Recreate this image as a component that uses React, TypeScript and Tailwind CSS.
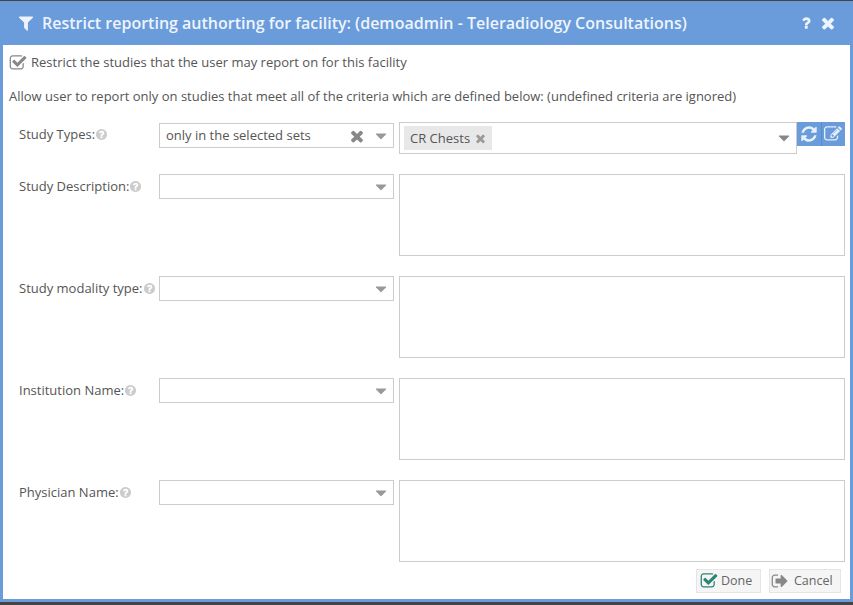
import React from 'react';

const paths = {
  filter: 'M1595 295q17 41-14 70l-493 493v742q0 42-39 59-13 5-25 5-27 0-45-19l-256-256q-19-19-19-45v-486l-493-493q-31-29-14-70 17-39 59-39h1280q42 0 59 39z',
  question: 'M1088 1256v240q0 16-12 28t-28 12h-240q-16 0-28-12t-12-28v-240q0-16 12-28t28-12h240q16 0 28 12t12 28zm316-600q0 54-15.5 101t-35 76.5-55 59.5-57.5 43.5-61 35.5q-41 23-68.5 65t-27.5 67q0 17-12 32.5t-28 15.5h-240q-15 0-25.5-18.5t-10.5-37.5v-45q0-83 65-156.5t143-108.5q59-27 84-56t25-76q0-42-46.5-74t-107.5-32q-65 0-108 29-35 25-107 115-13 16-31 16-12 0-25-8l-164-125q-13-10-15.5-25t5.5-28q160-266 464-266 80 0 161 31t146 83 106 127.5 41 158.5z',
  times: 'M1490 1322q0 40-28 68l-136 136q-28 28-68 28t-68-28l-294-294-294 294q-28 28-68 28t-68-28l-136-136q-28-28-28-68t28-68l294-294-294-294q-28-28-28-68t28-68l136-136q28-28 68-28t68 28l294 294 294-294q28-28 68-28t68 28l136 136q28 28 28 68t-28 68l-294 294 294 294q28 28 28 68z',
  check: 'M1472 930v318q0 119-84.5 203.5t-203.5 84.5h-832q-119 0-203.5-84.5t-84.5-203.5v-832q0-119 84.5-203.5t203.5-84.5h832q63 0 117 25 15 7 18 23 3 17-9 29l-49 49q-10 10-23 10-3 0-9-2-23-6-45-6h-832q-66 0-113 47t-47 113v832q0 66 47 113t113 47h832q66 0 113-47t47-113v-254q0-13 9-22l64-64q10-10 23-10 6 0 12 3 20 8 20 29zm231-489l-814 814q-24 24-57 24t-57-24l-430-430q-24-24-24-57t24-57l110-110q24-24 57-24t57 24l263 263 647-647q24-24 57-24t57 24l110 110q24 24 24 57t-24 57z',
  refresh: 'M1639 1056q0 5-1 7-64 268-268 434.5t-478 166.5q-146 0-282.5-55t-243.5-157l-129 129q-19 19-45 19t-45-19-19-45v-448q0-26 19-45t45-19h448q26 0 45 19t19 45-19 45l-137 137q71 66 161 102t187 36q134 0 250-65t186-179q11-17 53-117 8-23 30-23h192q13 0 22.5 9.5t9.5 22.5zm25-800v448q0 26-19 45t-45 19h-448q-26 0-45-19t-19-45 19-45l138-138q-148-137-349-137-134 0-250 65t-186 179q-11 17-53 117-8 23-30 23h-199q-13 0-22.5-9.5t-9.5-22.5v-7q65-268 270-434.5t480-166.5q146 0 284 55.5t245 156.5l130-129q19-19 45-19t45 19 19 45z',
  edit: 'M888 1184l116-116-152-152-116 116v56h96v96h56zm440-720q-16-16-33 1l-350 350q-17 17-1 33t33-1l350-350q17-17 1-33zm80 594v190q0 119-84.5 203.5t-203.5 84.5h-832q-119 0-203.5-84.5t-84.5-203.5v-832q0-119 84.5-203.5t203.5-84.5h832q63 0 117 25 15 7 18 23 3 17-9 29l-49 49q-14 14-32 8-23-6-45-6h-832q-66 0-113 47t-47 113v832q0 66 47 113t113 47h832q66 0 113-47t47-113v-126q0-13 9-22l64-64q15-15 35-7t20 29zm-96-738l288 288-672 672h-288v-288zm444 132l-92 92-288-288 92-92q28-28 68-28t68 28l152 152q28 28 28 68t-28 68z',
  help: 'M1024 1376v-192q0-14-9-23t-23-9h-192q-14 0-23 9t-9 23v192q0 14 9 23t23 9h192q14 0 23-9t9-23zm256-672q0-88-55.5-163t-138.5-116-170-41q-243 0-371 213-15 24 8 42l132 100q7 6 19 6 16 0 25-12 53-68 86-92 34-24 86-24 48 0 85.5 26t37.5 59q0 38-20 61t-68 45q-63 28-115.5 86.5t-52.5 125.5v36q0 14 9 23t23 9h192q14 0 23-9t9-23q0-19 21.5-49.5t54.5-49.5q32-18 49-28.5t46-35 44.5-48 28-60.5 12.5-81zm384 192q0 209-103 385.5t-279.5 279.5-385.5 103-385.5-103-279.5-279.5-103-385.5 103-385.5 279.5-279.5 385.5-103 385.5 103 279.5 279.5 103 385.5z',
  caret: 'M1408 704q0 26-19 45l-448 448q-19 19-45 19t-45-19l-448-448q-19-19-19-45t19-45 45-19h896q26 0 45 19t19 45z',
  signOut: 'M704 1440q0 4 1 20t.5 26.5-3 23.5-10 19.5-20.5 6.5h-320q-119 0-203.5-84.5t-84.5-203.5v-704q0-119 84.5-203.5t203.5-84.5h320q13 0 22.5 9.5t9.5 22.5q0 4 1 20t.5 26.5-3 23.5-10 19.5-20.5 6.5h-320q-66 0-113 47t-47 113v704q0 66 47 113t113 47h312l11.5 1 11.5 3 8 5.5 7 9 2 13.5zm928-544q0 26-19 45l-544 544q-19 19-45 19t-45-19-19-45v-288h-448q-26 0-45-19t-19-45v-384q0-26 19-45t45-19h448v-288q0-26 19-45t45-19 45 19l544 544q19 19 19 45z',
};

const Icon: React.FC<{ name: keyof typeof paths; className: string }> = ({ name, className }) => (
  <svg viewBox="0 0 1792 1792" fill="currentColor" className={`shrink-0 ${className}`}>
    <path d={paths[name]} />
  </svg>
);

const SelectBox: React.FC<{ value?: string }> = ({ value }) => (
  <div className="flex h-[25px] w-[235px] shrink-0 items-center border border-[#cccccc] bg-white pl-[6px] pr-[3px]">
    <span className="flex-1 text-[13px] text-[#555555]">{value}</span>
    {value && <Icon name="times" className="mr-[6px] h-[18px] w-[18px] text-[#888888]" />}
    <Icon name="caret" className="h-[18px] w-[18px] text-[#999999]" />
  </div>
);

const Label: React.FC<{ text: string }> = ({ text }) => (
  <div className="flex h-[25px] w-[156px] shrink-0 items-center pl-[16px] text-[13px] text-[#555555]">
    <span className="whitespace-nowrap">{text}</span>
    <Icon name="help" className="h-[13px] w-[13px] text-[#cccccc]" />
  </div>
);

const rows = ['Study Description:', 'Study modality type:', 'Institution Name:', 'Physician Name:'];

export default function App() {
  return (
    <div className="h-[605px] w-[853px] overflow-hidden bg-[#444444] pt-[1px] font-['Open_Sans',sans-serif]">
      <div className="flex h-[601px] flex-col border-x-[3px] border-b-[3px] border-[#6a9bdb] bg-white">
        <div className="-mx-[3px] flex h-[44px] shrink-0 items-center bg-[#6a9bdb] pl-[17px] pr-[16px] text-[#eef4fb]">
          <Icon name="filter" className="mr-[7px] h-[18px] w-[18px]" />
          <span className="flex-1 text-[16px] font-semibold">
            Restrict reporting authorting for facility: (demoadmin - Teleradiology Consultations)
          </span>
          <Icon name="question" className="mr-[5px] h-[16px] w-[16px]" />
          <Icon name="times" className="h-[18px] w-[18px]" />
        </div>

        <div className="flex h-[34px] items-center pl-[6px] pt-[1px] text-[13px] text-[#555555]">
          <Icon name="check" className="mr-[4px] h-[18px] w-[18px] text-[#888888]" />
          Restrict the studies that the user may report on for this facility
        </div>
        <div className="h-[27px] pl-[6px] pt-[8px] text-[13px] leading-[18px] text-[#555555]">
          Allow user to report only on studies that meet all of the criteria which are defined below: (undefined criteria are ignored)
        </div>

        <div className="flex pr-[5px] pt-[16px]">
          <Label text="Study Types:" />
          <div className="mt-[1px]">
            <SelectBox value="only in the selected sets" />
          </div>
          <div className="ml-[5px] flex h-[32px] w-[398px] items-center border border-[#cccccc] pl-[4px] pr-[3px]">
            <span className="flex h-[24px] items-center bg-[#e8e8e8] pl-[6px] pr-[5px] pt-[1px] text-[13px] text-[#555555]">
              CR Chests
              <Icon name="times" className="ml-[4px] h-[13px] w-[13px] text-[#999999]" />
            </span>
            <span className="flex-1" />
            <Icon name="caret" className="h-[18px] w-[18px] text-[#888888]" />
          </div>
          <div className="flex h-[24px] w-[48px] bg-[#6a9bdb] text-[#e8f0fa]">
            <span className="flex flex-1 items-center justify-center border-r border-[#5a8bcb]">
              <Icon name="refresh" className="h-[18px] w-[18px]" />
            </span>
            <span className="flex flex-1 items-center justify-center">
              <Icon name="edit" className="h-[18px] w-[18px]" />
            </span>
          </div>
        </div>

        <div className="flex flex-col gap-[20px] pr-[5px] pt-[20px]">
          {rows.map(row => (
            <div key={row} className="flex">
              <Label text={row} />
              <SelectBox />
              <div className="ml-[5px] h-[82px] flex-1 border border-[#cccccc]" />
            </div>
          ))}
        </div>

        <div className="flex justify-end gap-[8px] pr-[9px] pt-[7px]">
          <button className="flex h-[24px] w-[65px] items-center border border-[#e5e5e5] bg-[#f5f5f5] pl-[3px] text-[12.5px] text-[#666666]">
            <Icon name="check" className="mr-[3px] h-[18px] w-[18px] text-[#2a8574]" />
            Done
          </button>
          <button className="flex h-[24px] w-[72px] items-center border border-[#e5e5e5] bg-[#f5f5f5] pl-[1px] text-[12.5px] text-[#666666]">
            <Icon name="signOut" className="mr-[5px] h-[18px] w-[18px] text-[#888888]" />
            Cancel
          </button>
        </div>
      </div>
    </div>
  );
}
